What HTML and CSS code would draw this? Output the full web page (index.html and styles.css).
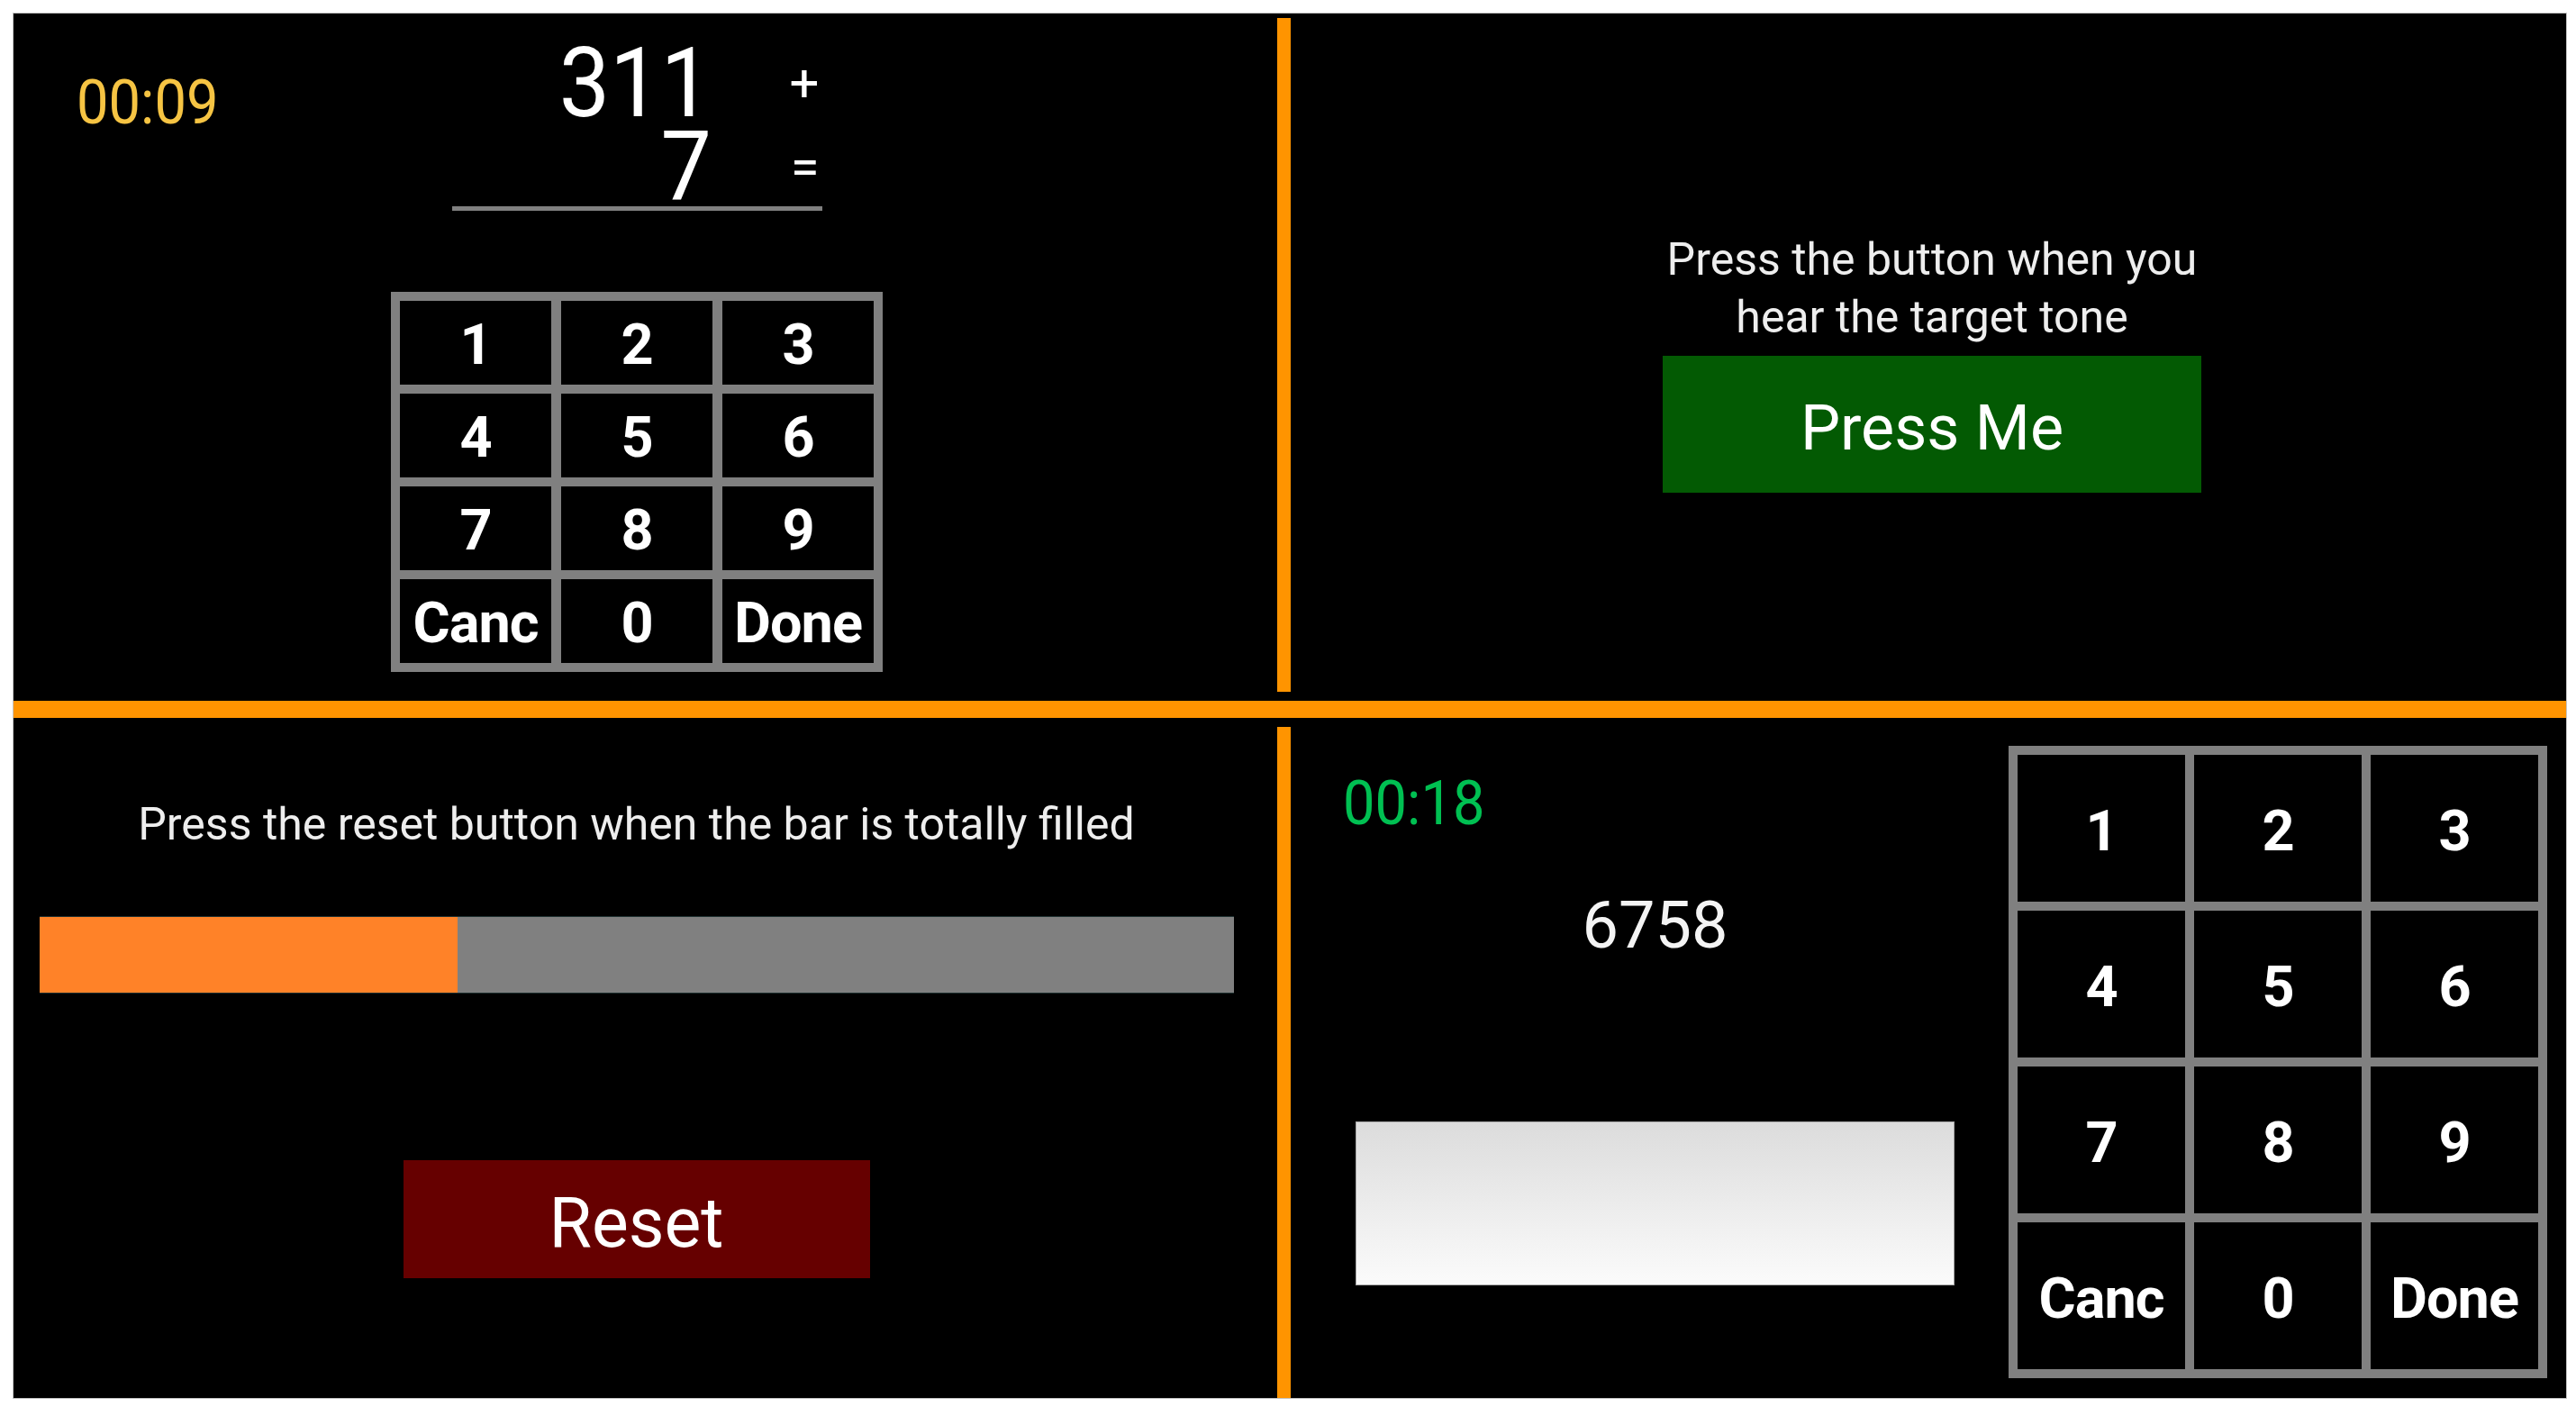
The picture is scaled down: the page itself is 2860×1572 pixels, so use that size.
FILE: index.html
```html
<!DOCTYPE html>
<html lang="en">
<head>
<meta charset="utf-8">
<title>Multitask</title>
<link rel="stylesheet" href="styles.css">
</head>
<body>
<div class="frame">
  <div class="row row-top">
    <section class="quad quad-math">
      <div class="timer timer-yellow">00:09</div>
      <div class="math-col">
        <div class="sum">
          <div class="num">311</div><div class="op">+</div>
          <div class="num num-second">7</div><div class="op op-second">=</div>
        </div>
        <div class="keypad keypad-small">
          <div class="key">1</div><div class="key">2</div><div class="key">3</div>
          <div class="key">4</div><div class="key">5</div><div class="key">6</div>
          <div class="key">7</div><div class="key">8</div><div class="key">9</div>
          <div class="key">Canc</div><div class="key">0</div><div class="key">Done</div>
        </div>
      </div>
    </section>
    <div class="vline vline-top"></div>
    <section class="quad quad-tone">
      <p class="prompt prompt-tone">Press the button when you hear the target tone</p>
      <div class="btn btn-green">Press Me</div>
    </section>
  </div>
  <div class="hline"></div>
  <div class="row row-bottom">
    <section class="quad quad-bar">
      <p class="prompt prompt-bar">Press the reset button when the bar is totally filled</p>
      <div class="bar"><div class="bar-fill" style="width:35%"></div></div>
      <div class="btn btn-red">Reset</div>
    </section>
    <div class="vline vline-bottom"></div>
    <section class="quad quad-memo">
      <div class="memo-col">
        <div class="timer timer-green">00:18</div>
        <div class="target">6758</div>
        <div class="answer"></div>
      </div>
      <div class="keypad keypad-large">
        <div class="key">1</div><div class="key">2</div><div class="key">3</div>
        <div class="key">4</div><div class="key">5</div><div class="key">6</div>
        <div class="key">7</div><div class="key">8</div><div class="key">9</div>
        <div class="key">Canc</div><div class="key">0</div><div class="key">Done</div>
      </div>
    </section>
  </div>
</div>
</body>
</html>
```

FILE: styles.css
```css
html, body {
  margin: 0;
  padding: 0;
  background: #ffffff;
}

body {
  width: 2860px;
  height: 1572px;
  overflow: hidden;
  font-family: Roboto, "Noto Sans", "Liberation Sans", sans-serif;
  color: #ffffff;
}

.frame {
  margin: 15px 0 0 15px;
  width: 2834px;
  height: 1537px;
  background: #000000;
  display: flex;
  flex-direction: column;
  box-shadow: 0 0 0 1px #c4c4c4;
}

.row {
  display: flex;
  flex: none;
}

.row-top {
  height: 763px;
}

.row-bottom {
  height: 755px;
}

.hline {
  flex: none;
  height: 19px;
  background: #ff9400;
}

.vline {
  flex: none;
  width: 15px;
  background: #ff9400;
}

.vline-top {
  margin: 5px 0 10px;
}

.vline-bottom {
  margin: 10px 0 0;
}

.quad {
  flex: none;
  box-sizing: border-box;
}

.quad-math,
.quad-bar {
  width: 1403px;
}

.quad-tone,
.quad-memo {
  width: 1416px;
}

/* ---------- timers ---------- */
.timer {
  font-size: 68px;
  line-height: 1;
  font-weight: 400;
  transform: scaleX(0.93);
  transform-origin: left center;
  white-space: nowrap;
}

.timer-yellow {
  color: #f6c443;
}

.timer-green {
  color: #00c052;
}

/* ---------- top-left: arithmetic ---------- */
.quad-math {
  display: flex;
  align-items: flex-start;
  padding-left: 70px;
}

.quad-math .timer {
  flex: none;
  width: 349px;
  margin-top: 65px;
}

.math-col {
  flex: none;
  width: 546px;
  display: flex;
  flex-direction: column;
  align-items: center;
  padding-top: 29px;
}

.sum {
  width: 411px;
  display: grid;
  grid-template-columns: 288px 1fr;
  grid-template-rows: 97px 88px;
  border-bottom: 5px solid #808080;
}

.num {
  font-size: 108px;
  line-height: 97px;
  height: 97px;
  overflow: visible;
  text-align: right;
  transform: scaleX(0.93);
  transform-origin: right center;
}

.num-second {
  line-height: 88px;
  height: 88px;
}

.op {
  font-size: 58px;
  line-height: 97px;
  text-align: right;
  padding-right: 3px;
}

.op-second {
  line-height: 88px;
}

.keypad {
  display: grid;
  background: #808080;
  padding: 10px;
}

.keypad-small {
  margin-top: 90px;
  grid-template-columns: repeat(3, 168px);
  grid-template-rows: repeat(4, 93px);
  column-gap: 11px;
  row-gap: 10px;
}

.keypad-large {
  flex: none;
  margin-top: 31px;
  grid-template-columns: repeat(3, 186px);
  grid-template-rows: repeat(4, 163px);
  gap: 10px;
}

.key {
  background: #000000;
  display: flex;
  align-items: center;
  justify-content: center;
  padding-top: 3px;
  font-size: 63px;
  font-weight: 700;
  color: #ffffff;
  letter-spacing: -1px;
}

.keypad-large .key {
  padding-top: 5px;
}

/* ---------- prompts & buttons ---------- */
.prompt {
  margin: 0;
  font-size: 50px;
  line-height: 64px;
  color: #eeeeee;
  text-align: center;
}

.btn {
  display: flex;
  align-items: center;
  justify-content: center;
  color: #ffffff;
  box-sizing: border-box;
}

/* ---------- top-right: tone ---------- */
.quad-tone {
  display: flex;
  flex-direction: column;
  align-items: center;
  padding-top: 241px;
  padding-left: 8px;
}

.prompt-tone {
  width: 640px;
}

.btn-green {
  margin-top: 11px;
  width: 598px;
  height: 152px;
  padding-top: 8px;
  background: #035a03;
  font-size: 70px;
}

/* ---------- bottom-left: bar ---------- */
.quad-bar {
  display: flex;
  flex-direction: column;
  align-items: center;
  padding-top: 86px;
  padding-right: 20px;
}

.prompt-bar {
  white-space: nowrap;
}

.bar {
  margin-top: 71px;
  width: 1326px;
  height: 84px;
  background: #808080;
  box-shadow: 0 -1px 0 #1e3030, 0 1px 0 #1e3030;
  display: flex;
}

.bar-fill {
  height: 100%;
  background: #ff8228;
}

.btn-red {
  margin-top: 186px;
  width: 518px;
  height: 131px;
  padding-top: 8px;
  background: #660000;
  font-size: 77px;
}

/* ---------- bottom-right: memory ---------- */
.quad-memo {
  display: flex;
  align-items: flex-start;
}

.memo-col {
  flex: none;
  width: 797px;
  box-sizing: border-box;
  padding: 61px 48px 0 60px;
  display: flex;
  flex-direction: column;
  align-items: center;
}

.memo-col .timer {
  align-self: flex-start;
  margin-left: -2px;
}

.target {
  margin-top: 66px;
  font-size: 72px;
  line-height: 1;
  color: #f4f4f4;
}

.answer {
  margin-top: 181px;
  width: 665px;
  height: 182px;
  box-sizing: border-box;
  border: 1px solid #a8a8a8;
  background: linear-gradient(to bottom, #dcdcdc, #fbfbfb);
}
```
